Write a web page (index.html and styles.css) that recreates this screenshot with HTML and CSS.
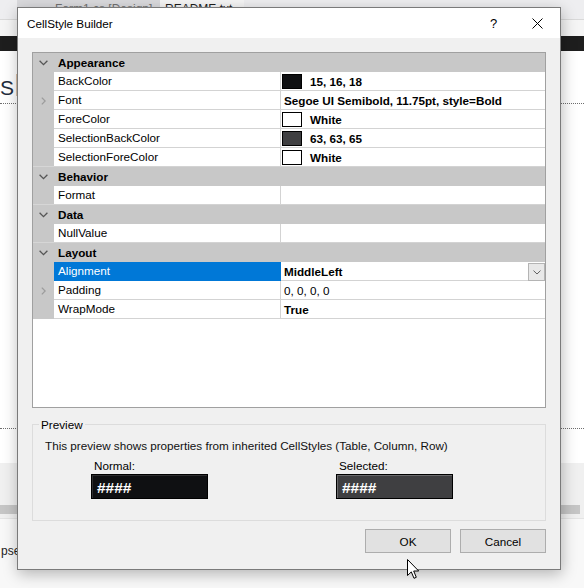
FILE: index.html
```html
<!DOCTYPE html>
<html lang="en">
<head>
<meta charset="utf-8">
<title>CellStyle Builder</title>
<link rel="stylesheet" href="styles.css">
</head>
<body>
<div class="ide">
  <div class="tabstrip">
    <div class="tab tab-design">Form1.cs [Design]</div>
    <div class="tab tab-active">README.txt</div>
  </div>
  <div class="toolbar"></div>
  <div class="darkbar"></div>
  <div class="designer">
    <div class="design-head"><span class="design-title">S</span><span class="caret"></span></div>
    <div class="design-body"></div>
  </div>
  <div class="status"></div>
  <div class="hscroll"><div class="hscroll-thumb"></div></div>
  <div class="hscroll-gap"></div>
  <div class="output"><span class="output-link">pse</span></div>
</div>

<div class="dialog">
  <div class="titlebar">
    <div class="title">CellStyle Builder</div>
    <div class="tb-btn tb-help">?</div>
    <div class="tb-btn tb-close">
      <svg width="11" height="11" viewBox="0 0 11 11"><path d="M0.5 0.5 L10.5 10.5 M10.5 0.5 L0.5 10.5" stroke="#000" stroke-width="1" fill="none"/></svg>
    </div>
  </div>

  <div class="client">
    <div class="pgrid">
      <div class="pg-cat">
        <span class="pg-margin"><svg width="9" height="6" viewBox="0 0 9 6"><path d="M0.6 0.8 L4.5 4.7 L8.4 0.8" fill="none" stroke="#555" stroke-width="1.3"/></svg></span>
        <span class="pg-cat-name">Appearance</span>
      </div>
      <div class="pg-row">
        <span class="pg-margin"></span>
        <span class="pg-name">BackColor</span>
        <span class="pg-value swatched"><i class="swatch swatch-back"></i>15, 16, 18</span>
      </div>
      <div class="pg-row">
        <span class="pg-margin"><svg width="5" height="8" viewBox="0 0 5 8"><path d="M0.8 0.6 L4.2 4 L0.8 7.4" fill="none" stroke="#9c9c9c" stroke-width="1.3"/></svg></span>
        <span class="pg-name">Font</span>
        <span class="pg-value">Segoe UI Semibold, 11.75pt, style=Bold</span>
      </div>
      <div class="pg-row">
        <span class="pg-margin"></span>
        <span class="pg-name">ForeColor</span>
        <span class="pg-value swatched"><i class="swatch swatch-white"></i>White</span>
      </div>
      <div class="pg-row">
        <span class="pg-margin"></span>
        <span class="pg-name">SelectionBackColor</span>
        <span class="pg-value swatched"><i class="swatch swatch-selback"></i>63, 63, 65</span>
      </div>
      <div class="pg-row pg-last">
        <span class="pg-margin"></span>
        <span class="pg-name">SelectionForeColor</span>
        <span class="pg-value swatched"><i class="swatch swatch-white"></i>White</span>
      </div>

      <div class="pg-cat">
        <span class="pg-margin"><svg width="9" height="6" viewBox="0 0 9 6"><path d="M0.6 0.8 L4.5 4.7 L8.4 0.8" fill="none" stroke="#555" stroke-width="1.3"/></svg></span>
        <span class="pg-cat-name">Behavior</span>
      </div>
      <div class="pg-row pg-last">
        <span class="pg-margin"></span>
        <span class="pg-name">Format</span>
        <span class="pg-value"></span>
      </div>

      <div class="pg-cat">
        <span class="pg-margin"><svg width="9" height="6" viewBox="0 0 9 6"><path d="M0.6 0.8 L4.5 4.7 L8.4 0.8" fill="none" stroke="#555" stroke-width="1.3"/></svg></span>
        <span class="pg-cat-name">Data</span>
      </div>
      <div class="pg-row pg-last">
        <span class="pg-margin"></span>
        <span class="pg-name">NullValue</span>
        <span class="pg-value"></span>
      </div>

      <div class="pg-cat">
        <span class="pg-margin"><svg width="9" height="6" viewBox="0 0 9 6"><path d="M0.6 0.8 L4.5 4.7 L8.4 0.8" fill="none" stroke="#555" stroke-width="1.3"/></svg></span>
        <span class="pg-cat-name">Layout</span>
      </div>
      <div class="pg-row">
        <span class="pg-margin"></span>
        <span class="pg-name selected">Alignment</span>
        <span class="pg-value">MiddleLeft
          <span class="dropdown"><svg width="8" height="5" viewBox="0 0 8 5"><path d="M0.5 0.6 L4 4 L7.5 0.6" fill="none" stroke="#606060" stroke-width="1"/></svg></span>
        </span>
      </div>
      <div class="pg-row">
        <span class="pg-margin"><svg width="5" height="8" viewBox="0 0 5 8"><path d="M0.8 0.6 L4.2 4 L0.8 7.4" fill="none" stroke="#9c9c9c" stroke-width="1.3"/></svg></span>
        <span class="pg-name">Padding</span>
        <span class="pg-value plain">0, 0, 0, 0</span>
      </div>
      <div class="pg-row">
        <span class="pg-margin"></span>
        <span class="pg-name">WrapMode</span>
        <span class="pg-value">True</span>
      </div>
    </div>

    <div class="preview">
      <span class="preview-caption">Preview</span>
      <div class="preview-note">This preview shows properties from inherited CellStyles (Table, Column, Row)</div>
      <div class="preview-samples">
        <div class="sample">
          <div class="sample-label">Normal:</div>
          <div class="sample-box sample-normal">####</div>
        </div>
        <div class="sample">
          <div class="sample-label">Selected:</div>
          <div class="sample-box sample-selected">####</div>
        </div>
      </div>
    </div>

    <div class="buttons">
      <button class="btn">OK</button>
      <button class="btn">Cancel</button>
    </div>
  </div>
</div>

<svg class="pointer" width="13" height="21" viewBox="0 0 13 21"><path d="M0.5 0.5 L0.5 16.5 L4.3 12.9 L7 19.3 L9.3 18.3 L6.7 12 L11.7 12 Z" fill="#fff" stroke="#000" stroke-width="1" stroke-linejoin="miter"/></svg>
</body>
</html>
```

FILE: styles.css
```css
* {
  box-sizing: border-box;
}

html,
body {
  margin: 0;
  padding: 0;
}

body {
  width: 584px;
  height: 588px;
  overflow: hidden;
  position: relative;
  font-family: "Liberation Sans", Arial, sans-serif;
  font-size: 11.7px;
  color: #000;
  background: #f5f5f5;
}

/* ---------- IDE behind the dialog ---------- */

.ide {
  height: 588px;
  display: flex;
  flex-direction: column;
}

.tabstrip {
  height: 20px;
  flex: none;
  display: flex;
  padding-left: 17px;
  background: #eeeef0;
  border-bottom: 1px solid #d9d9d9;
}

.tab {
  line-height: 19px;
  font-size: 12px;
  white-space: nowrap;
}

.tab-design {
  width: 143px;
  padding-left: 38px;
  background: #dadadd;
  color: #717171;
}

.tab-active {
  padding: 0 12px 0 5px;
  background: #f5f5f5;
  color: #1e1e1e;
}

.toolbar {
  height: 16px;
  flex: none;
  background: #f5f5f5;
}

.darkbar {
  height: 15px;
  flex: none;
  background: #1e1e1e;
}

.designer {
  height: 412px;
  flex: none;
  background: #fff;
  display: flex;
  flex-direction: column;
}

.design-head {
  height: 52px;
  flex: none;
  display: flex;
  padding-top: 25px;
}

.design-title {
  width: 16px;
  font-size: 21px;
  line-height: 24px;
  color: #1f2d3d;
}

.caret {
  width: 1px;
  height: 22px;
  margin-top: -2px;
  background: #dcc3aa;
}

.design-body {
  height: 326px;
  flex: none;
  border-top: 1px dotted #6e6e6e;
  border-bottom: 1px dotted #6e6e6e;
}

.status {
  height: 42px;
  flex: none;
  background: #f0f0f0;
}

.hscroll {
  height: 9px;
  flex: none;
  background: #f0f0f0;
}

.hscroll-thumb {
  height: 9px;
  margin-right: 4px;
  background: #c6c6c6;
}

.hscroll-gap {
  height: 5px;
  flex: none;
  background: #f0f0f0;
  border-bottom: 1px solid #e4e4e4;
}

.output {
  flex: 1;
  padding: 25px 0 0 1px;
  background: #f8f8f8;
  overflow: hidden;
}

.output-link {
  display: inline-block;
  font-size: 12px;
  line-height: 15px;
  color: #1e1e1e;
}

/* ---------- CellStyle Builder dialog ---------- */

.dialog {
  position: absolute;
  left: 17px;
  top: 7px;
  width: 544px;
  height: 563px;
  display: flex;
  flex-direction: column;
  background: #f0f0f0;
  border: 1px solid #7a7a7a;
  box-shadow: 1px 4px 14px rgba(0, 0, 0, 0.28);
}

.titlebar {
  height: 30px;
  flex: none;
  display: flex;
  align-items: center;
  background: #fff;
}

.title {
  flex: 1;
  padding-left: 9px;
}

.tb-btn {
  width: 46px;
  height: 30px;
  display: flex;
  align-items: center;
  justify-content: center;
}

.tb-help {
  padding-left: 5px;
  font-size: 13px;
}

.tb-close svg {
  display: block;
}

.client {
  flex: 1;
  display: flex;
  flex-direction: column;
  padding: 14px;
}

/* property grid */

.pgrid {
  height: 356px;
  flex: none;
  background: #fff;
  border: 1px solid #a0a0a0;
}

.pg-cat {
  height: 19px;
  display: flex;
  align-items: center;
  background: #c8c8c8;
  font-weight: bold;
}

.pg-cat .pg-margin {
  height: 19px;
}

.pg-cat-name {
  padding-left: 4px;
}

.pg-row {
  height: 19px;
  display: flex;
}

.pg-margin {
  width: 21px;
  flex: none;
  display: flex;
  align-items: center;
  justify-content: center;
  background: #c8c8c8;
}

.pg-margin svg {
  display: block;
}

.pg-row.pg-last .pg-margin {
  border-bottom: 1px solid #d6d6d6;
}

.pg-name {
  width: 227px;
  flex: none;
  padding-left: 4px;
  line-height: 18px;
  white-space: nowrap;
  border-right: 1px solid #d3d3d3;
  border-bottom: 1px solid #d3d3d3;
}

.pg-name.selected {
  background: #0078d7;
  color: #fff;
  border-color: #0078d7;
}

.pg-value {
  flex: 1;
  display: flex;
  align-items: center;
  padding-left: 3px;
  font-weight: bold;
  white-space: nowrap;
  border-bottom: 1px solid #d3d3d3;
}

.pg-value.swatched {
  padding-left: 1px;
}

.pg-value.plain {
  font-weight: normal;
}

.swatch {
  width: 20px;
  height: 15px;
  flex: none;
  margin-right: 8px;
  border: 1px solid #000;
}

.swatch-back {
  background: #0f1012;
}

.swatch-white {
  background: #fff;
}

.swatch-selback {
  background: #3f3f41;
}

.dropdown {
  width: 17px;
  height: 18px;
  margin: 1px 0 0 auto;
  align-self: flex-start;
  display: flex;
  align-items: center;
  justify-content: center;
  background: #e8e8e8;
  border: 1px solid #b4b4b4;
}

.dropdown svg {
  display: block;
}

/* preview group */

.preview {
  height: 97px;
  flex: none;
  margin-top: 16px;
  border: 1px solid #dcdcdc;
}

.preview-caption {
  display: block;
  width: max-content;
  margin: -8px 0 0 6px;
  padding: 0 2px;
  line-height: 15px;
  background: #f0f0f0;
}

.preview-note {
  margin: 6px 0 0 12px;
  line-height: 15px;
  color: #101010;
}

.preview-samples {
  display: flex;
  gap: 128px;
  margin: 5px 0 0 58px;
}

.sample-label {
  padding-left: 3px;
  line-height: 15px;
}

.sample-box {
  width: 117px;
  height: 25px;
  margin-top: 1px;
  padding: 3px 0 0 5px;
  font-size: 15.5px;
  font-weight: bold;
  line-height: 20px;
  color: #fff;
  border: 1px solid #000;
}

.sample-normal {
  background: #0f1012;
  box-shadow: inset 1px 1px 0 #2e2e30;
}

.sample-selected {
  background: #3f3f41;
  box-shadow: inset 1px 1px 0 #6a6a6c;
}

/* dialog buttons */

.buttons {
  display: flex;
  justify-content: flex-end;
  gap: 9px;
  margin-top: 8px;
}

.btn {
  width: 86px;
  height: 24px;
  padding: 0;
  font-family: inherit;
  font-size: 11.7px;
  color: #000;
  background: #e1e1e1;
  border: 1px solid #adadad;
  border-radius: 0;
}

.pointer {
  position: absolute;
  left: 407px;
  top: 559px;
}
```
